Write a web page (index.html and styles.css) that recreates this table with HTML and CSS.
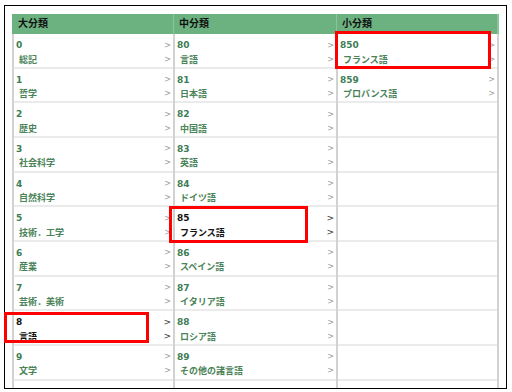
FILE: index.html
```html
<!DOCTYPE html>
<html lang="ja">
<head>
<meta charset="utf-8">
<link rel="stylesheet" href="styles.css">
</head>
<body>
<div class="frame">
  <div class="table">
    <div class="col">
      <div class="head">大分類</div>
      <div class="rows">
        <div class="row"><div class="line"><span class="num">0</span><span class="gt">&gt;</span></div><div class="line"><span class="name">総記</span><span class="gt">&gt;</span></div></div>
        <div class="row"><div class="line"><span class="num">1</span><span class="gt">&gt;</span></div><div class="line"><span class="name">哲学</span><span class="gt">&gt;</span></div></div>
        <div class="row"><div class="line"><span class="num">2</span><span class="gt">&gt;</span></div><div class="line"><span class="name">歴史</span><span class="gt">&gt;</span></div></div>
        <div class="row"><div class="line"><span class="num">3</span><span class="gt">&gt;</span></div><div class="line"><span class="name">社会科学</span><span class="gt">&gt;</span></div></div>
        <div class="row"><div class="line"><span class="num">4</span><span class="gt">&gt;</span></div><div class="line"><span class="name">自然科学</span><span class="gt">&gt;</span></div></div>
        <div class="row"><div class="line"><span class="num">5</span><span class="gt">&gt;</span></div><div class="line"><span class="name">技術．工学</span><span class="gt">&gt;</span></div></div>
        <div class="row"><div class="line"><span class="num">6</span><span class="gt">&gt;</span></div><div class="line"><span class="name">産業</span><span class="gt">&gt;</span></div></div>
        <div class="row"><div class="line"><span class="num">7</span><span class="gt">&gt;</span></div><div class="line"><span class="name">芸術．美術</span><span class="gt">&gt;</span></div></div>
        <div class="row active"><div class="line"><span class="num">8</span><span class="gt">&gt;</span></div><div class="line"><span class="name">言語</span><span class="gt">&gt;</span></div></div>
        <div class="row"><div class="line"><span class="num">9</span><span class="gt">&gt;</span></div><div class="line"><span class="name">文学</span><span class="gt">&gt;</span></div></div>
        <div class="row"></div>
      </div>
    </div>
    <div class="col">
      <div class="head">中分類</div>
      <div class="rows">
        <div class="row"><div class="line"><span class="num">80</span><span class="gt">&gt;</span></div><div class="line"><span class="name">言語</span><span class="gt">&gt;</span></div></div>
        <div class="row"><div class="line"><span class="num">81</span><span class="gt">&gt;</span></div><div class="line"><span class="name">日本語</span><span class="gt">&gt;</span></div></div>
        <div class="row"><div class="line"><span class="num">82</span><span class="gt">&gt;</span></div><div class="line"><span class="name">中国語</span><span class="gt">&gt;</span></div></div>
        <div class="row"><div class="line"><span class="num">83</span><span class="gt">&gt;</span></div><div class="line"><span class="name">英語</span><span class="gt">&gt;</span></div></div>
        <div class="row"><div class="line"><span class="num">84</span><span class="gt">&gt;</span></div><div class="line"><span class="name">ドイツ語</span><span class="gt">&gt;</span></div></div>
        <div class="row active"><div class="line"><span class="num">85</span><span class="gt">&gt;</span></div><div class="line"><span class="name">フランス語</span><span class="gt">&gt;</span></div></div>
        <div class="row"><div class="line"><span class="num">86</span><span class="gt">&gt;</span></div><div class="line"><span class="name">スペイン語</span><span class="gt">&gt;</span></div></div>
        <div class="row"><div class="line"><span class="num">87</span><span class="gt">&gt;</span></div><div class="line"><span class="name">イタリア語</span><span class="gt">&gt;</span></div></div>
        <div class="row"><div class="line"><span class="num">88</span><span class="gt">&gt;</span></div><div class="line"><span class="name">ロシア語</span><span class="gt">&gt;</span></div></div>
        <div class="row"><div class="line"><span class="num">89</span><span class="gt">&gt;</span></div><div class="line"><span class="name">その他の諸言語</span><span class="gt">&gt;</span></div></div>
        <div class="row"></div>
      </div>
    </div>
    <div class="col last">
      <div class="head">小分類</div>
      <div class="rows">
        <div class="row"><div class="line"><span class="num">850</span><span class="gt">&gt;</span></div><div class="line"><span class="name">フランス語</span><span class="gt">&gt;</span></div></div>
        <div class="row"><div class="line"><span class="num">859</span><span class="gt">&gt;</span></div><div class="line"><span class="name">プロバンス語</span><span class="gt">&gt;</span></div></div>
        <div class="row"></div>
        <div class="row"></div>
        <div class="row"></div>
        <div class="row"></div>
        <div class="row"></div>
        <div class="row"></div>
        <div class="row"></div>
        <div class="row"></div>
        <div class="row"></div>
      </div>
    </div>
  </div>
</div>
<div class="mark mark-850"></div>
<div class="mark mark-85"></div>
<div class="mark mark-8"></div>
</body>
</html>
```
FILE: styles.css
```css
html, body {
  margin: 0;
  padding: 0;
  background: #fff;
}
body {
  position: relative;
  width: 512px;
  height: 392px;
  overflow: hidden;
  font-family: "DejaVu Sans", "Noto Sans CJK JP", sans-serif;
}
.frame {
  box-sizing: border-box;
  margin: 5px 0 0 4px;
  width: 503px;
  height: 384px;
  border: 1px solid #000;
  padding: 8px 0 0 7px;
  overflow: hidden;
}
.table {
  display: grid;
  grid-template-columns: 161px 163px 163px;
}
.col {
  display: flex;
  flex-direction: column;
}
.head {
  box-sizing: border-box;
  height: 20px;
  background: #6cb281;
  border-left: 1px solid #8cc39c;
  padding-left: 5px;
  font-size: 10px;
  font-weight: 700;
  color: #111;
  line-height: 20px;
}
.col:first-child .head {
  border-left-color: #6cb281;
}
.rows {
  box-sizing: border-box;
  border-left: 2px solid #d2d2d2;
}
.last .rows {
  border-right: 2px solid #d2d2d2;
}
.last .head {
  border-right: 2px solid #8cc39c;
}
.row {
  box-sizing: border-box;
  height: 34.667px;
  border-bottom: 2px solid #ebebeb;
  padding: 4px 2px 0 2px;
}
.line {
  display: flex;
  justify-content: space-between;
  align-items: center;
  height: 14px;
}
.num {
  font-size: 9px;
  font-weight: 700;
  color: #3d7c55;
}
.name {
  font-size: 9px;
  font-weight: 700;
  color: #4a8358;
  padding-left: 3px;
}
.gt {
  font-size: 8px;
  color: #9a9a9a;
}
.active .num,
.active .name {
  color: #111;
}
.active .gt {
  color: #333;
  font-size: 9px;
}
.mark {
  position: absolute;
  box-sizing: border-box;
  border: 3px solid #f00;
}
.mark-850 {
  left: 335px;
  top: 31px;
  width: 156px;
  height: 38px;
}
.mark-85 {
  left: 169px;
  top: 206px;
  width: 139px;
  height: 37px;
}
.mark-8 {
  left: 4px;
  top: 312px;
  width: 145px;
  height: 31px;
}
```
